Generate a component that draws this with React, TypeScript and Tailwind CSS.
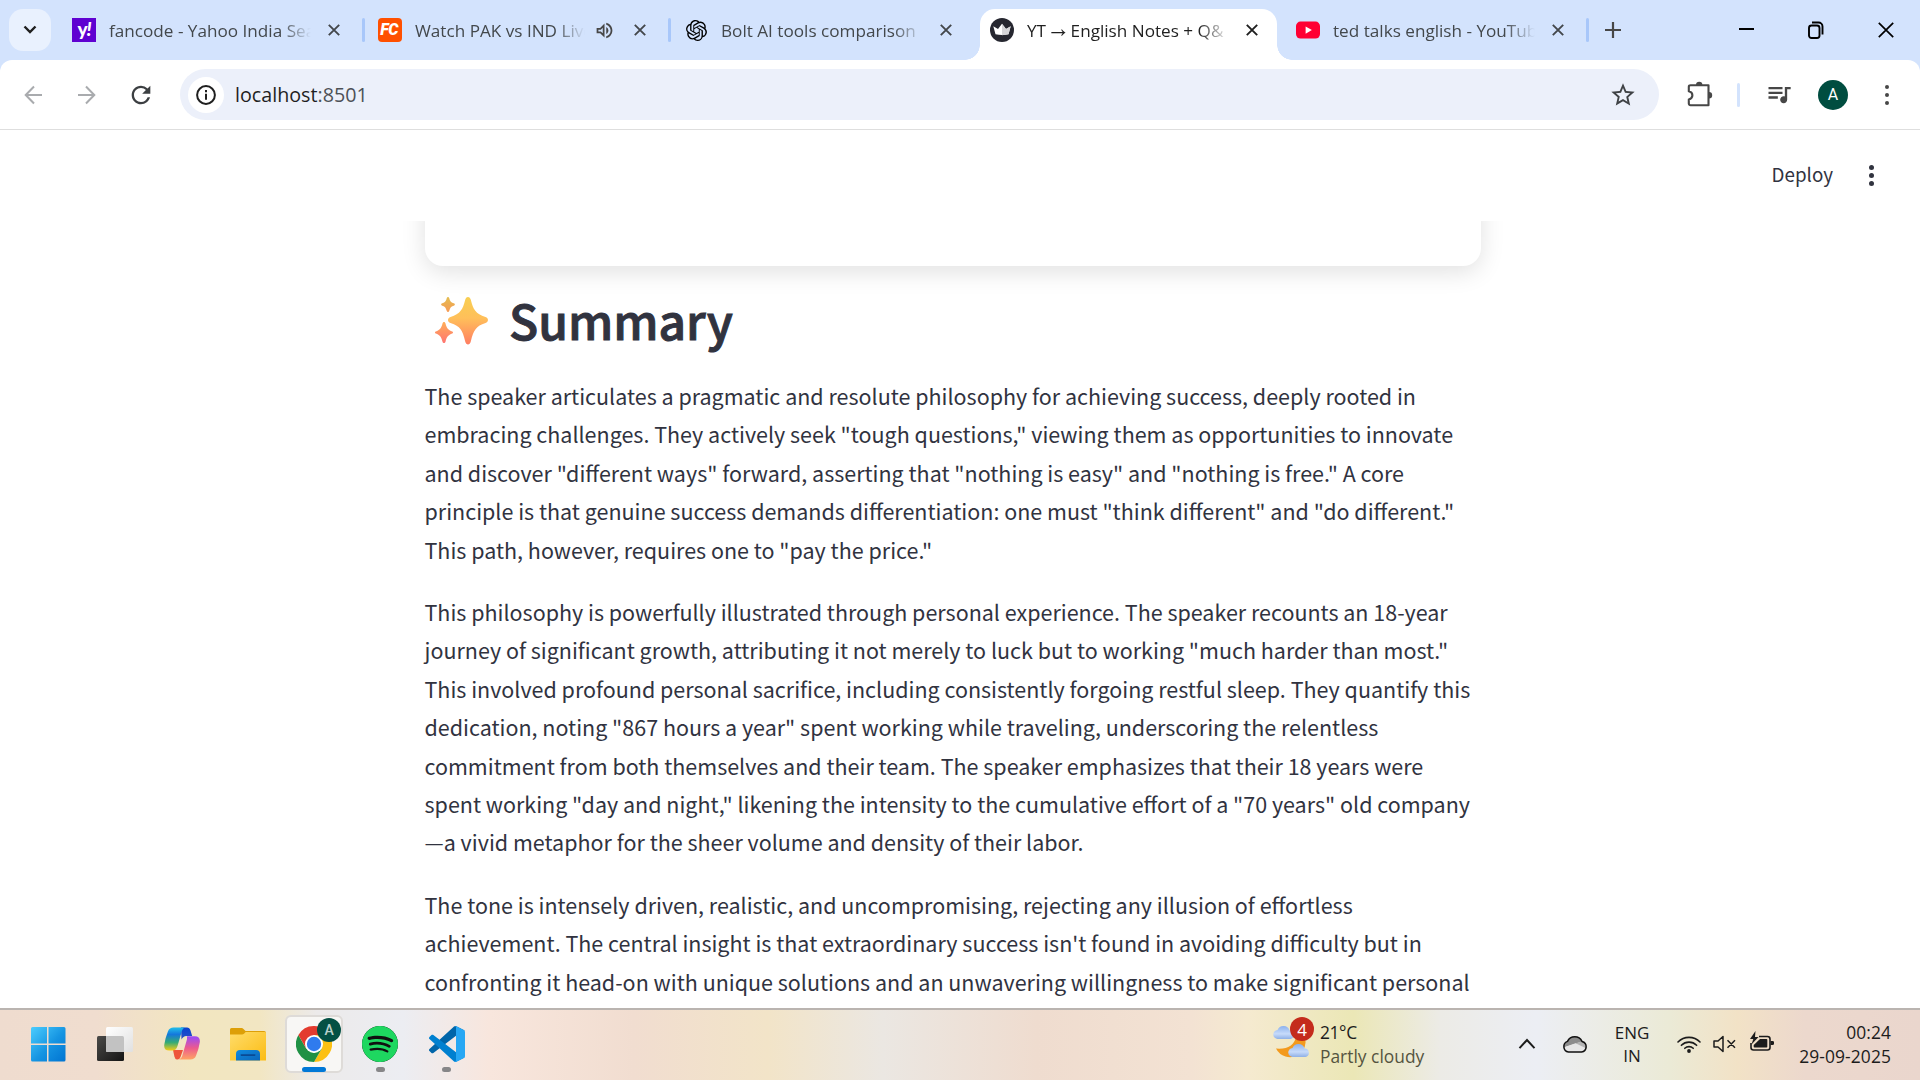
import type { ReactNode } from "react";
import { MdQueueMusic, MdRefresh, MdStarBorder, MdOutlineVolumeUp } from "react-icons/md";
import { SiOpenai, SiSpotify } from "react-icons/si";

const paragraphs: string[][] = [
  [
    "The speaker articulates a pragmatic and resolute philosophy for achieving success, deeply rooted in",
    'embracing challenges. They actively seek "tough questions," viewing them as opportunities to innovate',
    'and discover "different ways" forward, asserting that "nothing is easy" and "nothing is free." A core',
    'principle is that genuine success demands differentiation: one must "think different" and "do different."',
    'This path, however, requires one to "pay the price."',
  ],
  [
    "This philosophy is powerfully illustrated through personal experience. The speaker recounts an 18-year",
    'journey of significant growth, attributing it not merely to luck but to working "much harder than most."',
    "This involved profound personal sacrifice, including consistently forgoing restful sleep. They quantify this",
    'dedication, noting "867 hours a year" spent working while traveling, underscoring the relentless',
    "commitment from both themselves and their team. The speaker emphasizes that their 18 years were",
    'spent working "day and night," likening the intensity to the cumulative effort of a "70 years" old company',
    "—a vivid metaphor for the sheer volume and density of their labor.",
  ],
  [
    "The tone is intensely driven, realistic, and uncompromising, rejecting any illusion of effortless",
    "achievement. The central insight is that extraordinary success isn't found in avoiding difficulty but in",
    "confronting it head-on with unique solutions and an unwavering willingness to make significant personal",
  ],
];

function Cross({ className }: { className: string }) {
  return (
    <svg viewBox="0 0 12 12" className={className} fill="none" stroke="currentColor">
      <path d="M0.8 0.8 11.2 11.2M11.2 0.8 0.8 11.2" strokeWidth="1.9" />
    </svg>
  );
}

function ThinCross({ className }: { className: string }) {
  return (
    <svg viewBox="0 0 16 16" className={className} fill="none" stroke="currentColor">
      <path d="M0.8 0.8 15.2 15.2M15.2 0.8 0.8 15.2" strokeWidth="1.7" />
    </svg>
  );
}

function YahooIcon() {
  return (
    <span className="flex size-6 items-center justify-center bg-[#5f01d1] pb-1 font-['Lato'] text-[19px] leading-none font-black tracking-[-1px] text-white">
      y<span className="italic">!</span>
    </span>
  );
}

function FanCodeIcon() {
  return (
    <span className="flex size-6 items-center justify-center rounded-[4px] bg-[#ff5000] pr-[2px] font-['Roboto'] text-[16px] leading-none font-black tracking-[-0.5px] text-white italic">
      FC
    </span>
  );
}

function CrownIcon() {
  return (
    <svg viewBox="0 0 24 24" className="size-6">
      <circle cx="12" cy="12" r="12" fill="#262730" />
      <path d="M3.3 8.2 8 11l4-5.3L16 11l4.7-2.8-2.2 8.1q-6.500 1.600-13 0Z" fill="#fff" />
      <path d="M12 5.700 16 11l4.700-2.800-2.200 8.100-6.500.9Z" fill="#d5d5d8" />
    </svg>
  );
}

function YouTubeIcon() {
  return (
    <svg viewBox="0 0 24 24" className="size-6">
      <rect y="3.600" width="24" height="17" rx="4.500" fill="#ff0033" />
      <path d="m9.600 8.500 6.300 3.600-6.300 3.600Z" fill="#fff" />
    </svg>
  );
}

type TabProps = {
  icon: ReactNode;
  title: ReactNode;
  active?: boolean;
  audio?: boolean;
  separator?: boolean;
};

function Tab({ icon, title, active, audio, separator }: TabProps) {
  return (
    <div className="relative flex h-[51px] w-[306px] shrink-0 items-center pb-[9px] pl-[13px]">
      {active && (
        <>
          <span className="absolute inset-y-0 right-[6px] left-[3px] rounded-t-[15px] bg-white" />
          <span className="absolute bottom-0 left-[-12px] size-[15px] bg-[radial-gradient(circle_at_0_0,transparent_14.5px,white_15px)]" />
          <span className="absolute right-[-9px] bottom-0 size-[15px] bg-[radial-gradient(circle_at_100%_0,transparent_14.5px,white_15px)]" />
        </>
      )}
      <span className="relative flex size-6 items-center justify-center">{icon}</span>
      <span
        className={
          "relative ml-[13px] overflow-hidden pt-[2px] text-[17.15px] leading-6 whitespace-nowrap [mask-image:linear-gradient(90deg,black_calc(100%-30px),transparent)] " +
          (audio ? "w-[170px] " : "w-[202px] ") +
          (active ? "text-[#1f1f1f]" : "text-[#43484c]")
        }
      >
        {title}
      </span>
      {audio && <MdOutlineVolumeUp className="relative ml-[9px] size-[21px] text-[#474747]" />}
      <Cross className={"absolute top-[15px] left-[269px] size-[12px] " + (active ? "text-[#1f1f1f]" : "text-[#43474b]")} />
      {separator && <span className="absolute top-[9px] right-0 h-6 w-[3px] rounded-full bg-[#a8c7fa]" />}
    </div>
  );
}

function TabStrip() {
  return (
    <div className="flex h-[60px] items-start bg-[#d3e3fd] pt-[9px] pl-[9px]">
      <div className="mr-2 flex h-[42px] w-[42px] items-center justify-center rounded-[14px] bg-[#e9f1fe]">
        <svg viewBox="0 0 14 10" className="h-[10px] w-[14px]" fill="none" stroke="#1f1f1f" strokeWidth="2.400">
          <path d="m1.500 1.500 5.500 5.500 5.500-5.500" />
        </svg>
      </div>
      <Tab icon={<YahooIcon />} title="fancode - Yahoo India Sear" separator />
      <Tab icon={<FanCodeIcon />} title="Watch PAK vs IND Live" audio separator />
      <Tab icon={<SiOpenai className="size-[21px] text-black" />} title="Bolt AI tools comparison" />
      <Tab
        icon={<CrownIcon />}
        title={
          <>
            YT <span className="font-['Noto_Sans_Math','DejaVu_Sans'] text-[15.5px]">→</span> English Notes + Q&amp;
          </>
        }
        active
      />
      <Tab icon={<YouTubeIcon />} title="ted talks english - YouTub" separator />
      <div className="ml-[16px] flex h-[42px] w-4 items-center">
        <svg viewBox="0 0 16 16" className="size-4" stroke="#474747" strokeWidth="2.200">
          <path d="M8 0v16M0 8h16" />
        </svg>
      </div>
      <div className="ml-auto flex h-[42px] items-center gap-[54px] pr-[26px]">
        <span className="mb-[3px] h-[2px] w-[15px] bg-black" />
        <svg viewBox="0 0 16 18" className="mb-px h-[18px] w-4" fill="none" stroke="black" strokeWidth="1.900">
          <rect x="1" y="4.500" width="10.500" height="12.500" rx="2.500" />
          <path d="M4 1.500h6.500a4 4 0 0 1 4 4v8" />
        </svg>
        <ThinCross className="mb-px size-[16px] text-black" />
      </div>
    </div>
  );
}

function Arrow({ flip }: { flip?: boolean }) {
  return (
    <svg viewBox="0 0 18 22" className={"h-[22px] w-[18px] " + (flip ? "rotate-180" : "")} fill="none" stroke="#a9abae" strokeWidth="2">
      <path d="M18 11H2M10 2.500 1.700 11l8.300 8.500" />
    </svg>
  );
}

function Toolbar() {
  return (
    <div className="bg-[#d3e3fd]">
      <div className="flex h-[70px] items-center rounded-t-[12px] border-b border-[#dedede] bg-white pl-6">
        <Arrow />
        <span className="ml-[36px]">
          <Arrow flip />
        </span>
        <MdRefresh className="ml-[31px] size-[28px] text-[#3c3f42]" />
        <div className="ml-[25px] flex h-[51px] w-[1479px] items-center rounded-full bg-[#ecf0fa] pl-[8px]">
          <span className="flex size-9 items-center justify-center rounded-full bg-white">
            <svg viewBox="0 0 20 20" className="size-5" fill="none" stroke="#1f1f1f">
              <circle cx="10" cy="10" r="8.900" strokeWidth="2" />
              <path d="M10 8.800v6M10 5v2.200" strokeWidth="2" />
            </svg>
          </span>
          <span className="ml-[11px] text-[19.7px] text-[#1f1f1f]">
            localhost<span className="text-[#4d5156]">:8501</span>
          </span>
          <MdStarBorder className="mr-[22px] ml-auto size-[28px] text-[#3f4245]" />
        </div>
        <svg viewBox="0 0 26 26" className="mb-[2px] ml-[28px] size-[26px]" fill="none" stroke="#474747" strokeWidth="2.100">
          <path d="M3.500 4.200h18v20h-18c-1 0-1.700-.6-1.700-1.600v-4.200c4.800-1.400 4.800-7 0-8.200V5.800c0-1 .7-1.600 1.700-1.600Z" strokeLinejoin="round" />
          <path d="M9 4a3.200 3.200 0 0 1 6.400 0ZM22 11a3.200 3.200 0 0 1 0 6.400Z" fill="#474747" stroke="none" />
        </svg>
        <span className="ml-[24px] h-6 w-[3px] rounded-full bg-[#d3e3fd]" />
        <MdQueueMusic className="mb-[2px] ml-[25px] size-[28px] text-[#474747]" />
        <span className="ml-[25px] flex size-[30px] items-center justify-center rounded-full bg-[#004d40] font-['Roboto'] text-[16px] text-white">
          A
        </span>
        <span className="ml-[37px] flex flex-col gap-1">
          <i className="size-1 rounded-full bg-[#474747]" />
          <i className="size-1 rounded-full bg-[#474747]" />
          <i className="size-1 rounded-full bg-[#474747]" />
        </span>
      </div>
    </div>
  );
}

function Sparkles() {
  return (
    <svg viewBox="0 0 54 50" className="mb-[2px] h-[50px] w-[54px]">
      <defs>
        <linearGradient id="spark" x1="0" y1="0" x2="0" y2="1">
          <stop offset="0" stopColor="#f8cf52" />
          <stop offset="0.450" stopColor="#ffbf5a" />
          <stop offset="1" stopColor="#ff7d62" />
        </linearGradient>
        <linearGradient id="sparkTop" x1="0" y1="0" x2="0" y2="1">
          <stop offset="0" stopColor="#e3bd50" />
          <stop offset="1" stopColor="#f79a55" />
        </linearGradient>
        <linearGradient id="sparkLow" x1="0" y1="0" x2="0" y2="1">
          <stop offset="0" stopColor="#ffae58" />
          <stop offset="1" stopColor="#ff7571" />
        </linearGradient>
      </defs>
      <path d="M33 1c1.500 0 2.300 1.200 2.800 2.800 2.500 10 4.700 13.700 14.700 17.300 3.300 1.200 3.300 4.800 0 6-9.500 3.200-12 7-14.700 18.500-.9 3.900-4.700 3.900-5.600 0C27.500 34.100 25.500 30.500 15.500 27.100c-3.300-1.200-3.300-4.800 0-6 10-3.600 12.200-7.300 14.700-17.300C30.700 2.200 31.500 1 33 1Z" fill="url(#spark)" />
      <path d="M13 1c.6 0 1 .4 1.200 1.100.9 3.600 2 4.500 5 5.500.9.300.9 1.500 0 1.800-3 1-4.100 2-5 5.700-.3 1.300-2.100 1.300-2.400 0-.9-3.700-2-4.700-5-5.700-.9-.3-.9-1.500 0-1.800 3-1 4.100-1.900 5-5.500.2-.7.600-1.100 1.200-1.100Z" fill="url(#sparkTop)" />
      <path d="M9 26c.8 0 1.300.6 1.500 1.500 1.200 4.900 2.700 6.400 6.800 8 1 .4 1 1.700 0 2.100-4 1.500-5.600 3.300-6.800 8.200-.4 1.700-2.600 1.700-3 0C6.300 40.900 4.800 39.100.8 37.600c-1.100-.4-1.100-1.700 0-2.100 4-1.600 5.500-3.100 6.700-8C7.700 26.600 8.200 26 9 26Z" fill="url(#sparkLow)" />
    </svg>
  );
}

function StreamlitPage() {
  return (
    <div className="flex h-[878px] flex-col bg-white font-['Noto_Sans_CJK_SC',sans-serif] text-[#31333f]">
      <div className="flex h-[91px] shrink-0 items-center justify-end pr-[46px]">
        <span className="pb-[2px] text-[18.8px] leading-none">Deploy</span>
        <span className="ml-[36px] flex flex-col gap-[3px]">
          <i className="size-[5px] rounded-full bg-[#31333f]" />
          <i className="size-[5px] rounded-full bg-[#31333f]" />
          <i className="size-[5px] rounded-full bg-[#31333f]" />
        </span>
      </div>
      <main className="min-h-0 flex-1 overflow-hidden pl-[425px]">
        <div className="-mt-10 h-[85px] w-[1056px] rounded-[18px] bg-white shadow-[0_6px_24px_rgba(0,0,0,0.12)]" />
        <h1 className="flex h-[111px] items-center pl-[10px]">
          <Sparkles />
          <span className="ml-[20px] pb-[6px] text-[48px] leading-none font-medium [-webkit-text-stroke:1px_#31333f]">Summary</span>
        </h1>
        <div className="-ml-[0.5px] flex flex-col gap-6 text-[21.49px] leading-[38.4px] whitespace-nowrap">
          {paragraphs.map((lines, i) => (
            <p key={i}>
              {lines.map((line) => (
                <span key={line} className="block">
                  {line}
                </span>
              ))}
            </p>
          ))}
        </div>
      </main>
    </div>
  );
}

function WindowsLogo() {
  return (
    <svg viewBox="0 0 36 36" className="size-9">
      <defs>
        <linearGradient id="win" x1="0" y1="0" x2="36" y2="36" gradientUnits="userSpaceOnUse">
          <stop offset="0" stopColor="#4fd0ff" />
          <stop offset="0.550" stopColor="#1594e2" />
          <stop offset="1" stopColor="#0073d1" />
        </linearGradient>
      </defs>
      <path d="M2.500 1H17v16.500H1v-15Q1 1 2.500 1ZM18.500 1H34q1.500 0 1.500 1.500v15h-17ZM1 19h16v16.500H2.500Q1 35.500 1 34ZM18.500 19h17v15q0 1.500-1.500 1.500H18.500Z" fill="url(#win)" />
    </svg>
  );
}

function TaskViewIcon() {
  return (
    <svg viewBox="0 0 36 36" className="size-9">
      <defs>
        <linearGradient id="tvDark" x1="0" y1="0" x2="1" y2="1">
          <stop offset="0" stopColor="#4b4a48" />
          <stop offset="1" stopColor="#141414" />
        </linearGradient>
        <linearGradient id="tvLight" x1="0" y1="0" x2="1" y2="1">
          <stop offset="0" stopColor="#ffffff" />
          <stop offset="1" stopColor="#e0e0e0" />
        </linearGradient>
      </defs>
      <rect x="0" y="10" width="27" height="25" rx="1.500" fill="url(#tvDark)" />
      <rect x="9" y="1" width="27" height="25" rx="1.500" fill="url(#tvLight)" />
      <path d="M9 10h16.500Q27 10 27 11.500V26H10.500Q9 26 9 24.500Z" fill="#c2c2c2" />
    </svg>
  );
}

function CopilotIcon() {
  return (
    <svg viewBox="0 0 36 36" className="size-9">
      <defs>
        <linearGradient id="cpA" x1="0" y1="0" x2="0" y2="1">
          <stop offset="0.050" stopColor="#1fb5e8" />
          <stop offset="0.300" stopColor="#1477dd" />
          <stop offset="0.650" stopColor="#35ab76" />
          <stop offset="1" stopColor="#f6cc15" />
        </linearGradient>
        <linearGradient id="cpB" x1="0" y1="0" x2="0" y2="1">
          <stop offset="0.050" stopColor="#a04cf0" />
          <stop offset="0.500" stopColor="#ec5a8e" />
          <stop offset="1" stopColor="#ffa463" />
        </linearGradient>
        <linearGradient id="cpC" x1="0" y1="0" x2="0" y2="1">
          <stop offset="0" stopColor="#0b43cf" />
          <stop offset="1" stopColor="#2a50c8" />
        </linearGradient>
      </defs>
      <path d="M17 1.500h6q2.600 0 3.500 3l1.700 5.500h-6q-3 0-4.700 3.500Z" fill="url(#cpC)" />
      <path d="M9 24h10l-2.500 7q-1.200 3-3.700 2.500-1.800-.4-2.400-3Z" fill="#ee553b" />
      <path d="M9.500 1.500h11.200q-2 .7-2.800 3.500L13.500 20q-1.400 4.500-5 4.500H5.200Q-.5 24.500.3 18.500 1.200 12 4 5.200 5.500 1.500 9.500 1.500Z" fill="url(#cpA)" />
      <path d="M22.800 10.300h8q5.700 0 5 6-.9 6.500-3.800 13.400-1.500 3.800-5.500 3.800H15q2.300-.5 3.200-3.500l4.300-15q1-3 .3-4.700Z" fill="url(#cpB)" />
    </svg>
  );
}

function FolderIcon() {
  return (
    <svg viewBox="0 0 36 36" className="size-9">
      <defs>
        <linearGradient id="fold" x1="0" y1="0" x2="1" y2="1">
          <stop offset="0" stopColor="#ffdc6b" />
          <stop offset="1" stopColor="#fbbc12" />
        </linearGradient>
        <linearGradient id="foldBlue" x1="0" y1="0" x2="1" y2="1">
          <stop offset="0" stopColor="#0f8be0" />
          <stop offset="1" stopColor="#0c66bb" />
        </linearGradient>
      </defs>
      <path d="M0 3.500Q0 2 1.500 2h10q1.200 0 2 1l2 2H34q2 0 2 2v5H0Z" fill="#dd9f08" />
      <path d="M0 8.500h12q1.200 0 2-.8l1.700-1.700H35q1 0 1 1v27.500H0Z" fill="url(#fold)" />
      <path d="M6 34.500V28q0-4 4-4h16q4 0 4 4v6.500Z" fill="url(#foldBlue)" />
      <rect x="10.500" y="28.300" width="15" height="1.600" rx=".8" fill="#0a4a94" />
    </svg>
  );
}

function ChromeIcon() {
  return (
    <svg viewBox="0 0 36 36" className="size-9">
      <path d="M18 9h15.590A18 18 0 0 1 18 36l7.800-13.500Z" fill="#fcc013" />
      <path d="M10.200 22.500 2.410 9A18 18 0 0 0 18 36l7.800-13.500L18 27Z" fill="#209145" />
      <path d="M18 9h15.590A18 18 0 0 0 2.410 9l7.790 13.500Z" fill="#e33b2e" />
      <circle cx="18" cy="18" r="9" fill="#fff" />
      <circle cx="18" cy="18" r="7.200" fill="#2f7bee" />
    </svg>
  );
}

function VsCodeIcon() {
  return (
    <svg viewBox="0 0 100 100" className="size-9">
      <path d="M96.460 10.800 75.860.880C73.470-.270 70.620.210 68.750 2.080L1.300 63.580C-.520 65.240-.510 68.090 1.300 69.750L6.810 74.750C8.300 76.100 10.530 76.200 12.130 74.990L93.360 13.370C96.090 11.300 100 13.250 100 16.670V16.430C100 14.030 98.620 11.840 96.460 10.800Z" fill="#0065a9" />
      <path d="M96.460 89.200 75.860 99.120C73.470 100.270 70.620 99.790 68.750 97.920L1.300 36.420C-.520 34.760-.510 31.910 1.300 30.250L6.810 25.250C8.300 23.900 10.530 23.800 12.130 25.010L93.360 86.630C96.090 88.700 100 86.750 100 83.330V83.570C100 85.970 98.620 88.160 96.460 89.200Z" fill="#0080d0" />
      <path d="M75.860 99.130C73.470 100.270 70.620 99.790 68.750 97.920 71.060 100.220 75 98.590 75 95.330V4.670C75 1.410 71.060-.220 68.750 2.080 70.620.210 73.470-.270 75.860.870L96.460 10.780C98.620 11.820 100 14.010 100 16.410V83.590C100 85.990 98.620 88.180 96.460 89.220Z" fill="#27a7f4" />
    </svg>
  );
}

function TaskItem({ children, mark }: { children: ReactNode; mark?: "active" | "open" }) {
  return (
    <div
      className={
        "relative flex size-[58px] items-center justify-center rounded-[6px] border-2 " +
        (mark === "active" ? "border-[#dedbd8] bg-[#f8f7f5]" : "border-transparent")
      }
    >
      {children}
      {mark === "active" && <span className="absolute -bottom-px h-[5px] w-6 rounded-full bg-[#0078d7]" />}
      {mark === "open" && <span className="absolute -bottom-px h-[5px] w-[9px] rounded-full bg-[#868688]" />}
    </div>
  );
}

function Cloud({ className }: { className: string }) {
  return (
    <svg viewBox="0 0 22 14" className={className}>
      <path d="M5 14a4.500 4.500 0 0 1-.5-9A6.500 6.500 0 0 1 16.600 5.500 4.300 4.300 0 0 1 17.500 14Z" fill="url(#cloud)" />
    </svg>
  );
}

function Weather() {
  return (
    <div className="relative h-[60px] w-10">
      <svg className="absolute size-0">
        <defs>
          <linearGradient id="cloud" x1="0" y1="0" x2="0" y2="1">
            <stop offset="0" stopColor="#8db2ee" />
            <stop offset="0.600" stopColor="#c7dbfa" />
            <stop offset="1" stopColor="#8fb0e6" />
          </linearGradient>
        </defs>
      </svg>
      <Cloud className="absolute top-[11px] left-0 h-[14px] w-[22px]" />
      <svg viewBox="0 0 31 22" className="absolute top-[22px] left-[3px] h-[22px] w-[31px]">
        <path d="M0 12.500Q17 14 20 1l8-1q4 8-2 15.500Q19 23 9.500 20.500 3 18.500 0 12.500Z" fill="#f39a1d" />
      </svg>
      <Cloud className="absolute top-[29px] left-[15px] h-[14px] w-[22px]" />
      <span className="absolute top-[3px] left-[17px] flex size-6 items-center justify-center rounded-full bg-[#c42b1c] text-[17px] leading-none text-white">
        4
      </span>
    </div>
  );
}

function SystemTray() {
  return (
    <div className="ml-auto flex items-center text-[17.4px] text-[#1c1c1c]">
      <Weather />
      <div className="ml-[7px] w-[193px] leading-6">
        <div className="tracking-[-0.4px]">21°C</div>
        <div className="text-[#55543f]">Partly cloudy</div>
      </div>
      <svg viewBox="0 0 18 12" className="ml-[5px] h-3 w-[18px]" fill="none" stroke="#1c1c1c" strokeWidth="2">
        <path d="M1.500 10.200 9 2l7.500 8.200" />
      </svg>
      <svg viewBox="0 0 26 18" className="ml-[26px] h-[18px] w-[26px]">
        <path d="M6.500 17a5.500 5.500 0 0 1-1-10.600 8 8 0 0 1 14.500 0A5.400 5.400 0 0 1 19.500 17Z" fill="#efefef" />
        <path d="M1.500 12.500Q2 7.200 5.500 6.400a8 8 0 0 1 14.500 0l-6 2Z" fill="#8c8c8c" />
        <path d="M1.500 12.500 13.500 8.300 24 13q-.8 4-4.500 4h-13q-4 0-5-4.500Z" fill="#e6e6e6" />
        <path d="M13.500 8.300 20 6.400q5 1.600 4.500 7Z" fill="#b4b4b4" />
        <path d="M6.500 17a5.500 5.500 0 0 1-1-10.600 8 8 0 0 1 14.500 0A5.400 5.400 0 0 1 19.500 17Z" fill="none" stroke="#111" strokeWidth="1.500" />
      </svg>
      <div className="ml-[26px] w-[36px] text-center text-[17px] leading-[23px]">
        ENG
        <br />
        IN
      </div>
      <svg viewBox="0 0 24 18" className="ml-[27px] h-[18px] w-6" fill="none" stroke="#1c1c1c" strokeWidth="1.600" strokeLinecap="round">
        <path d="M1 7a15.500 15.500 0 0 1 22 0M4.400 10.300a10.800 10.800 0 0 1 15.200 0M7.800 13.300a6 6 0 0 1 8.400 0" />
        <circle cx="12" cy="16" r="1.900" fill="#1c1c1c" stroke="none" />
      </svg>
      <svg viewBox="0 0 24 18" className="ml-[12px] h-[18px] w-6" fill="none" stroke="#1c1c1c" strokeWidth="1.500" strokeLinejoin="round">
        <path d="M1 6h4l5-4.500v15L5 12H1ZM14.500 5.200l7.500 7.600M22 5.200l-7.500 7.600" />
      </svg>
      <svg viewBox="0 0 26 22" className="mb-1 ml-[12px] h-[22px] w-[26px]">
        <path d="M10 5.500h8.500q2.500 0 2.500 2.500v8.500q0 2.500-2.500 2.500h-14Q2 19 2 16.500V12" fill="none" stroke="#1c1c1c" strokeWidth="1.600" />
        <path d="M11 8h6.500q.8 0 .8.800v7q0 .8-.8.800H5.500q-.8 0-.8-.8V14Z" fill="#1c1c1c" />
        <path d="M21.500 10h2q1.500 0 1.500 1.200v1.600q0 1.200-1.500 1.200h-2ZM6.500 0 1 8h3.300L2.500 13.500 9.500 6H6Z" fill="#1c1c1c" />
      </svg>
      <div className="w-[116px] text-right leading-[24.500px] tracking-[0.1px]">
        00:24
        <br />
        29-09-2025
      </div>
    </div>
  );
}

function Taskbar() {
  return (
    <footer className="flex h-[72px] items-center border-t-2 border-[#bab4b0] bg-[linear-gradient(90deg,#efdccf_0%,#f0ddcf_5%,#f2e6c0_10%,#f2e6c2_13.5%,#eceaea_16.5%,#ecedf2_21%,#f8e6dd_25.500%,#f1ddd0_33%,#f2e4c8_40%,#ebe7e2_46%,#efdccf_54%,#f3e2d3_62%,#f5ead0_65%,#ebe7b6_70.500%,#ecebe6_75%,#eceef4_80%,#ebead6_87%,#f2e2c6_90.500%,#ecd8cd_94%,#ead6cd_100%)] pr-[29px] pb-[2px] pl-[19px]">
      <div className="flex items-center gap-[8.300px]">
        <TaskItem><WindowsLogo /></TaskItem>
        <span className="ml-[1px]"><TaskItem><TaskViewIcon /></TaskItem></span>
        <TaskItem><CopilotIcon /></TaskItem>
        <TaskItem><FolderIcon /></TaskItem>
        <TaskItem mark="active">
          <ChromeIcon />
          <span className="absolute top-[1px] right-0 flex size-6 items-center justify-center rounded-full bg-[#045044] font-['Roboto'] text-[14px] leading-none font-medium text-[#b9d0cb]">
            A
          </span>
        </TaskItem>
        <TaskItem mark="open">
          <span className="rounded-full bg-[#101010]">
            <SiSpotify className="size-9 text-[#1ed760]" />
          </span>
        </TaskItem>
        <TaskItem mark="open"><VsCodeIcon /></TaskItem>
      </div>
      <SystemTray />
    </footer>
  );
}

export default function App() {
  return (
    <div className="flex h-[1080px] w-[1920px] flex-col overflow-hidden bg-white font-['Open_Sans',sans-serif]">
      <TabStrip />
      <Toolbar />
      <StreamlitPage />
      <Taskbar />
    </div>
  );
}
